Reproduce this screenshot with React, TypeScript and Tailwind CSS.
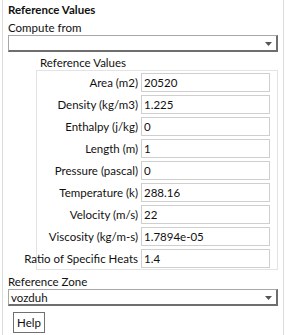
const rows: [string, string][] = [
  ["Area (m2)", "20520"],
  ["Density (kg/m3)", "1.225"],
  ["Enthalpy (j/kg)", "0"],
  ["Length (m)", "1"],
  ["Pressure (pascal)", "0"],
  ["Temperature (k)", "288.16"],
  ["Velocity (m/s)", "22"],
  ["Viscosity (kg/m-s)", "1.7894e-05"],
  ["Ratio of Specific Heats", "1.4"],
];

function Dropdown({ value }: { value?: string }) {
  return (
    <div className="relative h-[17px] w-[270px] border border-[#a8a8a8] border-r-2 border-b-2 border-r-[#6e6e6e] border-b-[#6e6e6e] bg-white">
      <span className="absolute left-[2px] top-[1px] leading-[13px]">{value}</span>
      <svg className="absolute right-[4px] top-[6px]" width="7" height="4" viewBox="0 0 7 4">
        <path d="M0 0h7L3.5 4z" fill="#555" />
      </svg>
    </div>
  );
}

export default function App() {
  return (
    <div
      className="w-[286px] h-[335px] bg-white text-[11.5px] text-[#111] overflow-hidden"
      style={{ fontFamily: 'Lato, "Liberation Sans", sans-serif' }}
    >
      <div className="ml-[2px] w-[282px] h-[335px] border-x border-[#dcdcdc] pl-[5px] pt-[3px]">
        <div className="font-bold leading-[14px]">Reference Values</div>
        <div className="mt-[4px] leading-[13px]">Compute from</div>
        <div className="mt-[1px]">
          <Dropdown />
        </div>
        <div className="ml-[30px] mt-[4px] leading-[13px] pl-[2px]">Reference Values</div>
        <div className="ml-[28px] mt-[1px] w-[242px] border border-[#e3e3e3] pt-[2px] pb-[1px] flex flex-col gap-[3px]">
          {rows.map(([label, value]) => (
            <div key={label} className="flex items-center h-[19px]">
              <div className="w-[104px] flex justify-end pr-[3px] whitespace-nowrap">{label}</div>
              <div className="w-[129px] h-[19px] border border-[#cfcfcf] bg-white pl-[2px] leading-[17px]">{value}</div>
            </div>
          ))}
        </div>
        <div className="mt-[5px] leading-[13px]">Reference Zone</div>
        <div className="mt-[1px]">
          <Dropdown value="vozduh" />
        </div>
        <div className="ml-[5px] mt-[6px] w-[32px] h-[21px] border border-[#707070] flex items-center justify-center leading-none">
          Help
        </div>
      </div>
    </div>
  );
}
